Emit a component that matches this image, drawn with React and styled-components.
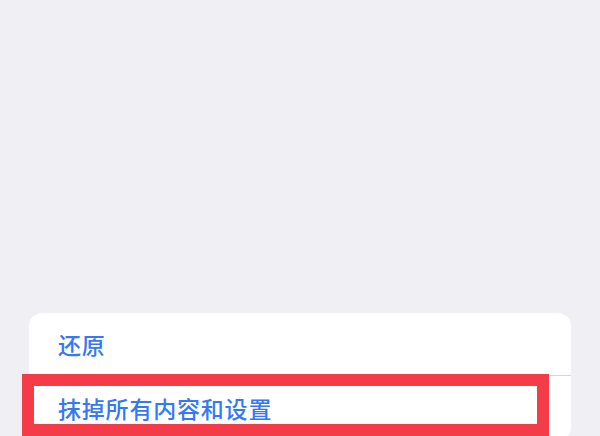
import React from 'react'
import styled, { createGlobalStyle } from 'styled-components'

const Global = createGlobalStyle`
  html, body {
    margin: 0;
    padding: 0;
    background: #efeff4;
  }
  body {
    font-family: "Noto Sans CJK SC", "Noto Sans", sans-serif;
  }
`

const Screen = styled.div`
  height: 436px;
  overflow: hidden;
  display: flex;
  flex-direction: column;
  padding-top: 313px;
  box-sizing: border-box;
`

const Card = styled.div`
  position: relative;
  margin: 0 29px;
  background: #fff;
  border-radius: 13px;
`

const Row = styled.div`
  height: ${(p) => p.h}px;
  display: flex;
  align-items: center;
  padding-left: 29px;
  color: #3478f6;
  font-size: 23px;
  font-weight: 500;
  letter-spacing: 0.8px;
`

const Divider = styled.div`
  height: 1px;
  margin-left: 28px;
  background: #d6d6da;
`

const Highlight = styled.div`
  position: absolute;
  left: -7px;
  top: 61px;
  width: 527px;
  height: 62px;
  border: 12px solid #f43c48;
  box-sizing: border-box;
  pointer-events: none;
`

export default function App() {
  return (
    <>
      <Global />
      <Screen>
        <Card>
          <Row h={62}>还原</Row>
          <Divider />
          <Row h={64}>抹掉所有内容和设置</Row>
          <Highlight />
        </Card>
      </Screen>
    </>
  )
}
